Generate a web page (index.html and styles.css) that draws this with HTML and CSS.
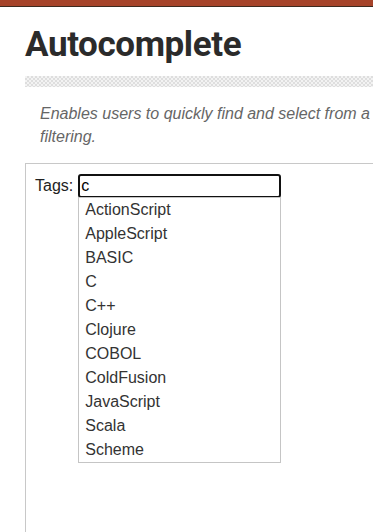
FILE: index.html
```html
<!DOCTYPE html>
<html lang="en">
<head>
    <meta charset="UTF-8">
    <meta name="viewport" content="width=device-width, initial-scale=1.0">
    <title>Autocomplete</title>
    <link rel="stylesheet" href="styles.css">
</head>
<body>
    <div class="topbar"></div>
    <div class="content">
        <h1>Autocomplete</h1>
        <div class="dots"></div>
        <p class="desc">Enables users to quickly find and select from a pre-populated list of values as they type, leveraging searching and filtering.</p>

        <div class="demo">
            <div class="field">
                <label for="tags">Tags:</label>
                <div class="combo">
                    <input id="tags" type="text" value="c">
                    <!-- Suggestion menu -->
                    <ul class="menu">
                        <li>ActionScript</li>
                        <li>AppleScript</li>
                        <li>BASIC</li>
                        <li>C</li>
                        <li>C++</li>
                        <li>Clojure</li>
                        <li>COBOL</li>
                        <li>ColdFusion</li>
                        <li>JavaScript</li>
                        <li>Scala</li>
                        <li>Scheme</li>
                    </ul>
                </div>
            </div>
        </div>
    </div>
</body>
</html>
```

FILE: styles.css
```css
/* Basic Reset */
* {
    box-sizing: border-box;
    margin: 0;
    padding: 0;
}

html, body {
    overflow: hidden;
}

body {
    font-family: "Liberation Sans", Arial, sans-serif;
    background-color: #fff;
    color: #333;
}

.topbar {
    height: 7px;
    background-color: #a6432a;
    border-bottom: 1px solid #3e2a20;
}

.content {
    width: 900px;
    padding-left: 25px;
}

h1 {
    font-family: Roboto, sans-serif;
    font-weight: 700;
    font-size: 35px;
    line-height: 40px;
    letter-spacing: -0.4px;
    color: #2b2b2b;
    margin-top: 18px;
}

.dots {
    height: 11px;
    margin-top: 11px;
    background-color: #ececec;
    background-image: repeating-conic-gradient(#dedede 0 25%, #f3f3f3 0 50%);
    background-size: 4px 4px;
}

.desc {
    width: 855px;
    font-size: 16px;
    font-style: italic;
    line-height: 23px;
    color: #666;
    padding-left: 15px;
    margin-top: 15px;
}

.demo {
    margin-top: 15px;
    border: 1px solid #c8c8c8;
    height: 420px;
    padding: 10px 9px;
}

.field {
    display: flex;
    align-items: center;
    gap: 5px;
    font-size: 16px;
    color: #222;
}

.combo {
    position: relative;
}

.combo input {
    width: 203px;
    height: 24px;
    border: 2px solid #111;
    border-radius: 3px;
    padding: 0 1px;
    font-family: "Liberation Sans", Arial, sans-serif;
    font-size: 16px;
    color: #000;
    outline: none;
}

.menu {
    position: absolute;
    top: 23px;
    left: 0;
    width: 203px;
    list-style: none;
    background-color: #fff;
    border: 1px solid #c5c5c5;
}

.menu li {
    line-height: 24px;
    padding-left: 6px;
    color: #333;
}
```
